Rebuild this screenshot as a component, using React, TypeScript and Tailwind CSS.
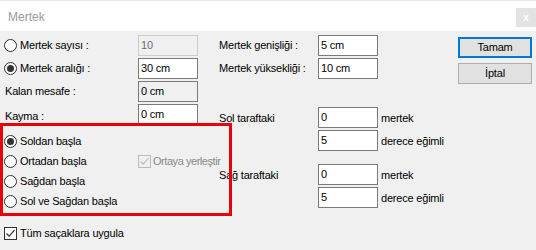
import React from "react";

function Radio({ checked }: { checked?: boolean }) {
  return (
    <span className="flex h-[13px] w-[13px] shrink-0 items-center justify-center rounded-full border border-[#333333] bg-white">
      {checked && <span className="h-[7px] w-[7px] rounded-full bg-[#333333]" />}
    </span>
  );
}

function Check({ disabled }: { disabled?: boolean }) {
  const c = disabled ? "#bcbcbc" : "#333333";
  return (
    <span
      className={
        disabled
          ? "flex h-[13px] w-[13px] shrink-0 items-center justify-center border border-[#bcbcbc] bg-[#f0f0f0]"
          : "flex h-[13px] w-[13px] shrink-0 items-center justify-center border border-[#333333] bg-white"
      }
    >
      <svg width="11" height="11" viewBox="0 0 11 11">
        <path d="M1.5 5.5 L4.2 8.2 L9.5 2.2" fill="none" stroke={c} strokeWidth="1.2" />
      </svg>
    </span>
  );
}

type BoxKind = "normal" | "disabled" | "readonly";

function Box({ value, kind = "normal" }: { value: string; kind?: BoxKind }) {
  const cls =
    kind === "disabled"
      ? "border-[#cccccc] bg-[#f0f0f0] text-[#6d6d6d]"
      : kind === "readonly"
      ? "border-[#7a7a7a] bg-[#f0f0f0] text-black"
      : "border-[#7a7a7a] bg-white text-black";
  return (
    <div className={`flex h-[21px] w-[60px] shrink-0 items-center border pl-[2px] ${cls}`}>
      {value}
    </div>
  );
}

export default function App() {
  return (
    <div className="h-[250px] w-[536px] overflow-hidden whitespace-nowrap font-['Liberation_Sans',Arial,sans-serif] text-[11px] tracking-[-0.2px] text-black">
      {/* Title bar */}
      <div className="flex h-[31px] items-start justify-between border-t border-[#e6e6e6] bg-white">
        <div className="pl-[8px] pt-[7px] text-[12px] tracking-normal text-[#9a9a9a]">Mertek</div>
        <div className="mt-[7px] flex h-[19px] w-[20px] items-center justify-center bg-[#e3e3e3] text-[10px] font-bold text-white">
          x
        </div>
      </div>

      {/* Body */}
      <div className="relative flex h-[219px] bg-[#f0f0f0]">
        {/* Left column */}
        <div className="flex w-[219px] shrink-0 flex-col pl-[4px] pt-[4px]">
          <div className="flex h-[21px] items-center">
            <Radio />
            <span className="ml-[3px] w-[118px] shrink-0">Mertek sayısı :</span>
            <Box value="10" kind="disabled" />
          </div>
          <div className="mt-[2px] flex h-[21px] items-center">
            <Radio checked />
            <span className="ml-[3px] w-[118px] shrink-0">Mertek aralığı :</span>
            <Box value="30 cm" />
          </div>
          <div className="mt-[2px] flex h-[21px] items-center">
            <span className="w-[134px] shrink-0 pl-[1px]">Kalan mesafe :</span>
            <Box value="0 cm" kind="readonly" />
          </div>
          <div className="mt-[2px] flex h-[21px] items-center">
            <span className="w-[134px] shrink-0 pl-[1px] pt-[3px]">Kayma :</span>
            <Box value="0 cm" />
          </div>

          <div className="mt-[6px] flex h-[20px] items-center">
            <Radio checked />
            <span className="ml-[3px]">Soldan başla</span>
          </div>
          <div className="flex h-[20px] items-center">
            <Radio />
            <span className="ml-[3px] w-[118px] shrink-0">Ortadan başla</span>
            <Check disabled />
            <span className="ml-[2px] shrink-0 tracking-[-0.45px] text-[#8a8a8a]">Ortaya yerleştir</span>
          </div>
          <div className="flex h-[20px] items-center">
            <Radio />
            <span className="ml-[3px]">Sağdan başla</span>
          </div>
          <div className="flex h-[20px] items-center">
            <Radio />
            <span className="ml-[3px]">Sol ve Sağdan başla</span>
          </div>

          <div className="mt-[12px] flex h-[20px] items-center">
            <Check />
            <span className="ml-[3px]">Tüm saçaklara uygula</span>
          </div>
        </div>

        {/* Middle column */}
        <div className="flex w-[238px] shrink-0 flex-col pt-[4px]">
          <div className="flex h-[21px] items-center">
            <span className="w-[99px] shrink-0">Mertek genişliği :</span>
            <Box value="5 cm" />
          </div>
          <div className="mt-[2px] flex h-[21px] items-center">
            <span className="w-[99px] shrink-0">Mertek yüksekliği :</span>
            <Box value="10 cm" />
          </div>

          <div className="mt-[28px] flex h-[21px] items-center">
            <span className="w-[99px] shrink-0 pt-[2px]">Sol taraftaki</span>
            <Box value="0" />
            <span className="ml-[3px] pt-[2px]">mertek</span>
          </div>
          <div className="mt-[2px] flex h-[21px] items-center">
            <span className="w-[99px] shrink-0" />
            <Box value="5" />
            <span className="ml-[3px] pt-[2px]">derece eğimli</span>
          </div>

          <div className="mt-[13px] flex h-[21px] items-center">
            <span className="w-[99px] shrink-0 pt-[2px]">Sağ taraftaki</span>
            <Box value="0" />
            <span className="ml-[3px] pt-[2px]">mertek</span>
          </div>
          <div className="mt-[2px] flex h-[21px] items-center">
            <span className="w-[99px] shrink-0" />
            <Box value="5" />
            <span className="ml-[3px] pt-[2px]">derece eğimli</span>
          </div>
        </div>

        {/* Right column: buttons */}
        <div className="flex flex-col pl-[1px] pt-[6px]">
          <div className="flex h-[21px] w-[74px] items-center justify-center border-2 border-[#0078d7] bg-[#e1e1e1]">
            Tamam
          </div>
          <div className="mt-[5px] flex h-[21px] w-[74px] items-center justify-center border border-[#adadad] bg-[#e1e1e1]">
            İptal
          </div>
        </div>

        {/* Red highlight annotation */}
        <div className="pointer-events-none absolute left-0 top-[92px] h-[93px] w-[232px] border-[3px] border-[#e8000b]" />
      </div>
    </div>
  );
}
